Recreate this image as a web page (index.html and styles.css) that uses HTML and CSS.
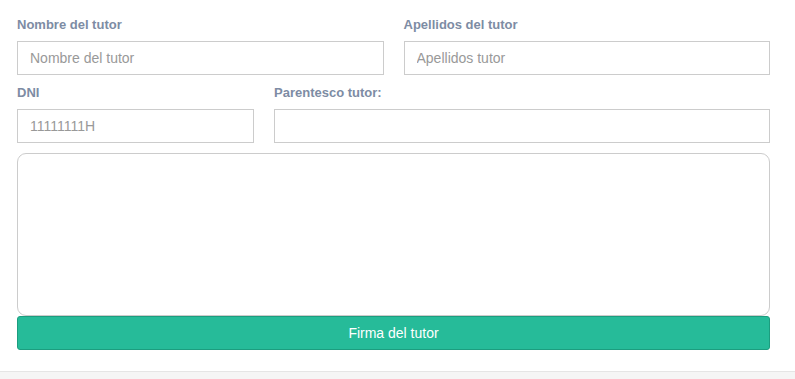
FILE: index.html
```html
<!DOCTYPE html>
<html lang="es">
<head>
  <meta charset="UTF-8">
  <meta name="viewport" content="width=device-width, initial-scale=1.0">
  <title>Datos del tutor</title>
  <link rel="stylesheet" href="styles.css">
</head>
<body>

  <div class="panel">
    <form class="form-tutor">
      <div class="fila">
        <div class="campo col-6">
          <label>Nombre del tutor</label>
          <input type="text" placeholder="Nombre del tutor">
        </div>
        <div class="campo col-6">
          <label>Apellidos del tutor</label>
          <input type="text" placeholder="Apellidos tutor">
        </div>
      </div>

      <div class="fila">
        <div class="campo col-4">
          <label>DNI</label>
          <input type="text" placeholder="11111111H">
        </div>
        <div class="campo col-8">
          <label>Parentesco tutor:</label>
          <input type="text">
        </div>
      </div>

      <div class="firma"></div>
      <button type="button" class="btn-firma">Firma del tutor</button>
    </form>
  </div>

  <div class="pie"></div>

</body>
</html>
```

FILE: styles.css
```css
body {
  font-family: "Liberation Sans", Arial, sans-serif;
  margin: 0;
  background: #fff;
}

.panel {
  padding: 17px 25px 21px 17px;
}

.fila {
  display: flex;
  gap: 20px;
  margin-bottom: 10px;
}

.campo {
  display: flex;
  flex-direction: column;
}

.col-6 { flex: 1 1 0; }
.col-4 { width: 237px; flex: none; }
.col-8 { flex: 1 1 0; }

label {
  font-size: 13px;
  font-weight: bold;
  color: #7d8ca4;
  line-height: 15px;
  height: 15px;
  margin-bottom: 9px;
}

input {
  box-sizing: border-box;
  height: 34px;
  padding: 0 12px;
  font-family: inherit;
  font-size: 14px;
  color: #555;
  border: 1px solid #ccc;
  border-radius: 0;
  outline: none;
}

input::placeholder {
  color: #999;
}

.firma {
  box-sizing: border-box;
  height: 163px;
  border: 1px solid #ccc;
  border-radius: 9px;
}

.btn-firma {
  display: block;
  width: 100%;
  height: 34px;
  background-color: #26bb99;
  border: 1px solid #1c9d7f;
  border-radius: 3px;
  color: #fff;
  font-family: inherit;
  font-size: 14px;
  cursor: pointer;
}

.pie {
  border-top: 1px solid #e5e5e5;
  background: #f5f5f5;
  height: 7px;
}
```
